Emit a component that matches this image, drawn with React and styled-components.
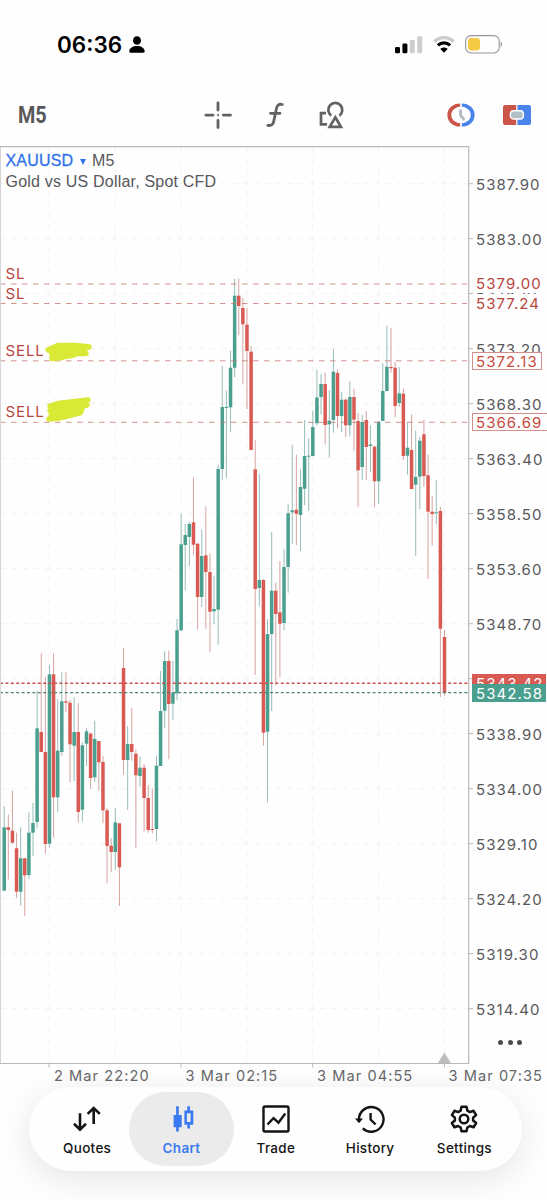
import React from "react";
import styled, { createGlobalStyle, css } from "styled-components";

const GREEN = "#4a9f8f";
const RED = "#d95a53";
const INK = "#626264";

// direction (1 up, 0 down), high, body top, body bottom, low
const candles = [
  [1, 806, 827.3, 890.7, 891], [0, 814.5, 827.3, 830, 879.5], [0, 790.7, 830.7, 842.7, 844],
  [0, 832.7, 848.3, 891.7, 897.7], [1, 827.3, 858.3, 891.7, 905.7], [0, 858, 858.3, 875.3, 916],
  [1, 812.3, 832.7, 875, 878.7], [1, 803, 823, 832.7, 856], [1, 690.7, 728.3, 822, 828.3],
  [0, 653.3, 732, 752, 752], [0, 676.7, 752, 844, 853.7], [1, 665, 674.3, 843.7, 847.7],
  [0, 653.3, 674.3, 797.3, 837.7], [1, 699.3, 750.7, 797.3, 811.7], [1, 672, 701.3, 752, 755.7],
  [0, 672, 701.3, 702.7, 712.3], [0, 700, 702.7, 744.3, 782.3], [1, 697.3, 732, 745.7, 781],
  [0, 703.3, 732, 812, 822.3], [1, 742.3, 745.3, 809.7, 821.7], [1, 728.3, 731.3, 743.7, 766],
  [0, 732.7, 733.7, 778, 788.7], [1, 720.7, 739, 777.3, 781.7], [0, 741, 741, 762.3, 790.7],
  [0, 756, 762, 810.3, 823.3], [0, 807.7, 810.3, 846, 883.3], [0, 838.3, 845.7, 852, 872],
  [1, 808, 822.3, 852, 869.7], [0, 823, 823.3, 867.3, 906], [0, 647.7, 668, 760, 774.7],
  [1, 726, 744, 760, 810], [0, 708, 744, 752, 760.7], [0, 749.3, 753.7, 775.3, 848],
  [1, 756.3, 767.7, 776, 786.7], [0, 764, 767.7, 798, 831.3], [0, 785, 798, 830, 832.7],
  [0, 788.7, 829, 830, 833.3], [1, 755.7, 765.7, 829, 841.3], [1, 671, 711, 766, 766],
  [1, 651.3, 661, 710.7, 728], [0, 650.7, 661, 704, 759.3], [1, 661, 692.7, 703.7, 720],
  [1, 619, 630.3, 693.3, 700.3], [1, 514, 544.3, 630.3, 631], [1, 523.7, 535, 545, 590.3],
  [1, 521.7, 524, 537, 566], [0, 477.5, 522.3, 544.7, 554.7], [0, 543, 543.7, 597, 629.7],
  [1, 529.3, 556, 597, 607], [0, 506.3, 555.3, 572, 628.7], [0, 553.3, 572, 611.7, 652],
  [1, 576, 609, 611.3, 624.3], [1, 464.7, 469, 609.7, 644.7], [1, 366, 407, 469, 479.7],
  [1, 390.7, 407, 407.7, 478.3], [1, 350.7, 367.7, 407.3, 432], [1, 278.7, 295.7, 367.7, 377],
  [0, 278.7, 295.7, 306, 335.3], [0, 298, 308, 324.3, 384.3], [0, 308, 324.7, 351, 409],
  [0, 346, 351.7, 450, 450], [0, 440.3, 469.3, 589, 675], [1, 474, 580, 588, 606],
  [0, 579, 580, 732.7, 745.7], [1, 619, 634, 731.7, 802.3], [1, 532, 590.7, 634, 711],
  [0, 582.7, 590.7, 614, 685.3], [0, 561, 612.3, 623.7, 677], [1, 549.3, 567, 623, 630],
  [1, 503.7, 513.3, 567, 592.7], [1, 444.7, 510.3, 512.3, 544], [0, 454.7, 509.7, 513.7, 545.3],
  [1, 469.3, 487, 515, 551], [1, 420, 456, 488.7, 505.3], [1, 438.3, 455.7, 456.5, 510.7],
  [1, 410.7, 427, 456, 456], [1, 369.5, 397.5, 423.2, 425.5], [1, 374.3, 384, 397, 414.7],
  [0, 372.7, 384, 425, 444.3], [1, 390, 420.7, 424.3, 457.7], [1, 349, 371.7, 420, 432.7],
  [0, 369.3, 373, 416, 428.3], [1, 392, 399.7, 416, 432], [0, 398.3, 399.7, 425.3, 437],
  [1, 381.3, 397, 425.3, 436], [0, 388.7, 397, 419.7, 450.7], [0, 413, 421, 470.3, 506.7],
  [1, 414.7, 422, 467, 480], [0, 411, 420, 447, 480], [1, 425.3, 444.5, 446, 472.3],
  [0, 446, 446.7, 481.3, 507.3], [1, 421.3, 421.7, 481.3, 503.7], [1, 363.3, 391, 421, 421],
  [1, 325.7, 366.7, 391, 391], [0, 328, 367, 368.2, 372.7], [0, 362, 367.7, 406, 417.3],
  [1, 367, 393.3, 403, 406.7], [0, 388.7, 393.7, 456, 460], [1, 422.7, 447.7, 455.7, 474.7],
  [0, 414.3, 450, 489, 489], [1, 430.7, 477, 484.7, 555.7], [1, 436.7, 440.7, 476.7, 509],
  [0, 420, 434.3, 476, 486.7], [0, 454.7, 475.3, 511.7, 579], [0, 496, 511.7, 514, 545.7],
  [1, 480, 512.3, 513, 524.3], [0, 507, 511, 628.7, 697], [0, 630, 637, 693, 695.7],
];

const prices = [
  "5387.90", "5383.00", "5378.10", "5373.20", "5368.30", "5363.40", "5358.50", "5353.60",
  "5348.70", "5343.80", "5338.90", "5334.00", "5329.10", "5324.20", "5319.30", "5314.40",
];

const gridX = [49, 115, 181, 247, 312.7, 378.5, 444.4];
const orderLines = [284, 303.5, 360.8, 422.3];

const CandleChart = () => (
  <Plot viewBox="0 146 475 922">
    <g stroke="#f2f2f4" strokeWidth="1" strokeDasharray="5.5 5.5">
      {prices.map((p, i) => (
        <line key={p} x1="1" x2="468" y1={183.7 + i * 55} y2={183.7 + i * 55} />
      ))}
      {gridX.map((x) => (
        <line key={x} x1={x} x2={x} y1="147" y2="1063" />
      ))}
    </g>
    {candles.map(([up, high, top, bottom, low], i) => {
      const x = 4.2 + i * 4.115;
      return (
        <g key={i}>
          <line x1={x} x2={x} y1={high} y2={low} stroke={up ? "#5c9a90" : "#c0706b"} strokeWidth="0.9" opacity="0.7" />
          <rect x={x - 1.75} y={top} width="3.5" height={Math.max(bottom - top, 1)} fill={up ? GREEN : RED} />
        </g>
      );
    })}
    <g stroke="#c4736b" strokeWidth="1" strokeDasharray="5.5 5.5" opacity="0.75">
      {orderLines.map((y) => (
        <line key={y} x1="0" x2="467" y1={y} y2={y} />
      ))}
    </g>
    <g strokeWidth="1.4" strokeDasharray="3 2.4">
      <line x1="0" x2="468" y1="683.2" y2="683.2" stroke="#cd4f4f" />
      <line x1="0" x2="468" y1="692.6" y2="692.6" stroke="#4b8379" />
    </g>
    <path d="M444.4 1052.5l6.5 10.5h-13z" fill="#bdbdbf" />
    <path d="M0.5 147V1063" stroke="#d5d5d7" />
    <path d="M0 146.7H468.7V1063.5H0" fill="none" stroke="#b9b9bc" strokeWidth="1.2" />
    <g stroke="#b9b9bc">
      {prices.map((p, i) => (
        <line key={p} x1="469" x2="473" y1={183.7 + i * 55} y2={183.7 + i * 55} />
      ))}
      {[49, 181, 312.7, 444.4].map((x) => (
        <line key={x} x1={x} x2={x} y1="1063" y2="1067.5" />
      ))}
    </g>
    {/* marker strokes over the lot sizes */}
    <g fill="none" stroke="#d8ea35" strokeWidth="5.4" strokeLinecap="round" strokeLinejoin="round">
      <path d="M48 350L58 345.5H76L89 347L66 349L50 351L84 350L86 353.5L70 353L52 355L74 355L52 358.5L62 357.5L80 353" />
      <path d="M50 406L58 403.5L88 400L72 404L54 406L87 405L70 409L50 411L82 409L80 413L52 415L49 419L60 418L80 413" />
    </g>
  </Plot>
);

const PersonIcon = () => (
  <svg width="16" height="17" viewBox="0 0 16 17">
    <ellipse cx="8" cy="4.5" rx="4" ry="4.3" />
    <path d="M.3 15.3C.3 11.8 4 9.9 8 9.9s7.700 1.900 7.700 5.400c0 1-.4 1.400-1.300 1.400H1.600C.7 16.700.3 16.300.3 15.300z" />
  </svg>
);

const SignalIcon = () => (
  <svg width="28" height="18" viewBox="0 0 28 18">
    <rect x="0" y="11" width="5" height="6.300" rx="1.300" />
    <rect x="7.400" y="7.500" width="5" height="9.800" rx="1.300" />
    <g fill="#cdcdcd">
      <rect x="14.800" y="4" width="5" height="13.300" rx="1.300" />
      <rect x="22.200" y="0.300" width="5" height="17" rx="1.300" />
    </g>
  </svg>
);

const WifiIcon = () => (
  <svg width="22" height="17" viewBox="0 0 22 17">
    <g fill="none" strokeWidth="3.100">
      <path d="M1.200 5.600C6.600.3 15.400.3 20.800 5.600" stroke="#cdcdcd" />
      <path d="M4.900 9.300C8.300 6.100 13.700 6.100 17.100 9.300" stroke="#000" />
    </g>
    <path d="M7.300 13C9.400 11 12.600 11 14.700 13L11 16.800z" />
  </svg>
);

const BatteryIcon = () => (
  <svg width="38" height="19" viewBox="0 0 38 19">
    <rect x=".6" y=".6" width="33.600" height="17.400" rx="5.500" fill="none" stroke="#97979a" strokeWidth="1.100" />
    <rect x="3" y="3" width="12" height="12.600" rx="3.300" fill="#f5ca45" />
    <path d="M35.700 6.500c1.700.7 1.700 5 0 5.700z" fill="#8e8e91" />
  </svg>
);

const CrosshairIcon = () => (
  <svg width="28" height="28" viewBox="0 0 28 28" stroke={INK} strokeWidth="2.800" strokeLinecap="round">
    <path d="M14 1.800V9M14 19.300V26.500M1.800 14.100H9M19.300 14.100H26.500" />
    <path d="M14 14.100h.01" strokeWidth="2.200" />
  </svg>
);

const FunctionIcon = () => (
  <svg width="20" height="26" viewBox="0 0 20 26" fill="none" stroke={INK} strokeWidth="2.800" strokeLinecap="round">
    <path d="M17.300 2.500C13.900 1.700 12.200 3 11.500 6.300L8.700 19.500C8 22.700 6.200 24 2.800 23.400M5.500 11.300H15" />
  </svg>
);

const ObjectsIcon = () => (
  <svg width="28" height="28" viewBox="0 0 28 28" fill="none" stroke={INK} strokeWidth="2.700">
    <path d="M8 12.200H3V23.400H9" />
    <path d="M13.200 14.600A7 7 0 1 1 21.400 14.600" />
    <path d="M17.300 16.300L22.900 25.800H11.700z" strokeLinejoin="miter" />
  </svg>
);

const ClockIcon = () => (
  <svg width="28" height="24" viewBox="0 0 28 24" fill="none">
    <path d="M13.200 2.300C6.500 2.300 2.300 6.700 2.300 12s4.200 9.700 10.900 9.700" stroke="#cb5548" strokeWidth="3.800" />
    <path d="M14.800 2.300C21.500 2.300 25.700 6.700 25.700 12s-4.200 9.700-10.900 9.700" stroke="#4b83ec" strokeWidth="3.800" />
    <circle cx="14" cy="12" r="8.500" fill="#fff" />
    <path d="M13.600 6.500V12.500L17.500 17" stroke="#b3bac0" strokeWidth="2.800" />
  </svg>
);

const OneClickIcon = () => (
  <svg width="28" height="20" viewBox="0 0 28 20">
    <path d="M2 0H13.200V20H2a2 2 0 0 1-2-2V2a2 2 0 0 1 2-2z" fill="#cb5548" />
    <path d="M14.500 0H26a2 2 0 0 1 2 2V18a2 2 0 0 1-2 2H14.500z" fill="#4b83ec" />
    <rect x="7.400" y="5.800" width="13" height="8.200" rx="3.300" fill="#b3bfc7" stroke="#fff" strokeWidth="1.400" />
  </svg>
);

const QuotesIcon = () => (
  <svg width="28" height="28" viewBox="0 0 28 28" fill="none" stroke="#141414" strokeWidth="2.600">
    <path d="M7 8.200V25M1 18.800L7 24.700L13 18.800" />
    <path d="M20.700 19V3.500M14.600 8.900L20.700 3L26.800 8.900" />
  </svg>
);

const ChartIcon = () => (
  <svg width="28" height="28" viewBox="0 0 28 28" fill="#3a7af0">
    <path d="M8.100 1.300h2.700v8.700h2.900v12.200h-2.900v4.300H8.100v-4.300H5.600V10h2.500z" />
    <path d="M19.300 1.300h2.700v4.200h3.300v14.300h-3.300v3.700h-2.700v-3.700h-2.900V5.500h2.900zM18.900 8.200v8.900h3.700V8.200z" fillRule="evenodd" />
  </svg>
);

const TradeIcon = () => (
  <svg width="28" height="28" viewBox="0 0 28 28" fill="none" stroke="#141414" strokeWidth="2.400">
    <rect x="1.500" y="1.500" width="25" height="25" rx="1.500" />
    <path d="M5.500 19.500L11.500 13.200L16.500 17.700L23.300 8.500" />
  </svg>
);

const HistoryIcon = () => (
  <svg width="30" height="28" viewBox="0 0 30 28" fill="none" stroke="#141414" strokeWidth="2.400">
    <path d="M4 15.500A12.300 12.300 0 1 1 7.800 23.300" />
    <path d="M0 13.500H8L4 18.300z" fill="#141414" stroke="none" />
    <path d="M15.600 8V14.500L20.600 19.500" />
  </svg>
);

const SettingsIcon = () => (
  <svg width="28" height="28" viewBox="0 0 28 28" fill="none" stroke="#141414" strokeWidth="2.500" strokeLinejoin="round">
    <path d="M11.500 1.700h5l.8 3.900 2.600 1.500 3.700-1.300 2.500 4.300-3 2.500v2.900l3 2.500-2.500 4.300-3.700-1.300-2.600 1.500-.8 3.800h-5l-.8-3.800-2.600-1.500-3.700 1.300-2.500-4.300 3-2.500v-2.900l-3-2.500 2.500-4.300 3.700 1.300 2.600-1.500z" />
    <circle cx="14" cy="14" r="4.300" />
  </svg>
);

const tabs = [
  { name: "Quotes", icon: <QuotesIcon /> },
  { name: "Chart", icon: <ChartIcon />, active: true },
  { name: "Trade", icon: <TradeIcon /> },
  { name: "History", icon: <HistoryIcon /> },
  { name: "Settings", icon: <SettingsIcon /> },
];

const App = () => {
  return (
    <Screen>
      <GlobalStyle />
      <StatusBar>
        <Time>06:36</Time>
        <PersonIcon />
        <StatusIcons>
          <SignalIcon />
          <WifiIcon />
          <BatteryIcon />
        </StatusIcons>
      </StatusBar>

      <Toolbar>
        <Timeframe>M5</Timeframe>
        <Tools>
          <CrosshairIcon />
          <FunctionIcon />
          <ObjectsIcon />
        </Tools>
        <TradeTools>
          <ClockIcon />
          <OneClickIcon />
        </TradeTools>
      </Toolbar>

      <ChartArea>
        <PlotPane>
          <CandleChart />
          <Legend>
            <p><Symbol>XAUUSD</Symbol><Arrow />M5</p>
            <p>Gold vs US Dollar, Spot CFD</p>
          </Legend>
          <OrderLabel $y={274}>SL</OrderLabel>
          <OrderLabel $y={294}>SL</OrderLabel>
          <OrderLabel $y={351}>SELL</OrderLabel>
          <OrderLabel $y={412}>SELL</OrderLabel>
        </PlotPane>
        <PriceAxis>
          {prices.map((p) => (
            <Price key={p}>{p}</Price>
          ))}
          <PriceTag $y={283.700}>5379.00</PriceTag>
          <PriceTag $y={303.500}>5377.24</PriceTag>
          <PriceTag $y={361} $kind="outline">5372.13</PriceTag>
          <PriceTag $y={422} $kind="outline" $wide>5366.69</PriceTag>
          <PriceTag $y={683.300} $kind="ask">5343.42</PriceTag>
          <PriceTag $y={692.800} $kind="bid">5342.58</PriceTag>
          <MoreDots><i /><i /><i /></MoreDots>
        </PriceAxis>
      </ChartArea>

      <TimeAxis>
        <span>2 Mar 22:20</span>
        <span>3 Mar 02:15</span>
        <span>3 Mar 04:55</span>
        <span>3 Mar 07:35</span>
      </TimeAxis>

      <TabBar>
        {tabs.map((t) => (
          <Tab key={t.name} $active={t.active}>
            {t.icon}
            <span>{t.name}</span>
          </Tab>
        ))}
      </TabBar>
    </Screen>
  );
};
export default App;

const GlobalStyle = createGlobalStyle`
  body {
    margin: 0;
    background: #fff;
  }
  svg {
    display: block;
    flex: none;
  }
  p {
    margin: 0;
  }
`;

const Screen = styled.div`
  width: 547px;
  height: 1200px;
  overflow: hidden;
  display: flex;
  flex-direction: column;
  background: #fefefe;
  font-family: Inter, "Liberation Sans", sans-serif;
`;

const StatusBar = styled.header`
  height: 90px;
  box-sizing: border-box;
  padding: 0 44px 1px 57px;
  display: flex;
  align-items: center;
  gap: 7px;
`;

const Time = styled.span`
  width: 65px;
  font-size: 22.5px;
  font-weight: 600;
  letter-spacing: 0;
  white-space: nowrap;
`;

const StatusIcons = styled.div`
  margin-left: auto;
  display: flex;
  align-items: center;
  gap: 10px;
`;

const Toolbar = styled.div`
  height: 56px;
  box-sizing: border-box;
  padding: 0 16px 6px 18px;
  display: flex;
  align-items: center;
`;

const Timeframe = styled.span`
  width: 186px;
  font: 700 23px Roboto, sans-serif;
  color: #58585a;
  transform: scaleX(0.86);
  transform-origin: left;
`;

const Tools = styled.div`
  display: flex;
  align-items: center;
  gap: 33px;
`;

const TradeTools = styled.div`
  margin-left: auto;
  display: flex;
  align-items: center;
  gap: 28px;
`;

const ChartArea = styled.div`
  height: 918px;
  display: grid;
  grid-template-columns: 469px 78px;
`;

const PlotPane = styled.div`
  position: relative;
`;

const Plot = styled.svg`
  width: 475px;
  height: 922px;
`;

const Legend = styled.div`
  position: absolute;
  left: 5.5px;
  top: 5px;
  font: 16px/20.5px "Liberation Sans", Arial, sans-serif;
  letter-spacing: 0.2px;
  color: #58585b;
  white-space: nowrap;
`;

const Symbol = styled.span`
  color: #2f73e8;
  -webkit-text-stroke: 0.3px #2f73e8;
`;

const Arrow = styled.i`
  display: inline-block;
  margin: 0 6px 1px 6.5px;
  border: 3.5px solid transparent;
  border-top: 6.5px solid #2f73e8;
  border-bottom: 0;
`;

const OrderLabel = styled.span`
  position: absolute;
  left: 5.5px;
  top: ${(p) => p.$y - 156}px;
  font-size: 15px;
  line-height: 20px;
  letter-spacing: 0.9px;
  color: #b8463f;
`;

const PriceAxis = styled.div`
  position: relative;
  padding-top: 11px;
  font-size: 15px;
  letter-spacing: 1.05px;
  white-space: nowrap;
  color: #58585b;
`;

const Price = styled.div`
  height: 55px;
  padding-left: 7px;
  line-height: 55px;
`;

const tagKinds = {
  outline: css`
    color: #c74a40;
    box-shadow: inset 0 0 0 1px #d58f8a;
  `,
  ask: css`
    color: #fff;
    background: ${RED};
  `,
  bid: css`
    color: #fff;
    background: ${GREEN};
  `,
};

const PriceTag = styled.span`
  position: absolute;
  left: 2.5px;
  top: ${(p) => p.$y - 155.300}px;
  width: ${(p) => (p.$wide ? 78 : p.$kind === "outline" ? 70.500 : 74)}px;
  height: 18.6px;
  box-sizing: border-box;
  padding-left: 4.5px;
  line-height: 19px;
  color: #b8463f;
  background: #fefefe;
  ${(p) => tagKinds[p.$kind]}
`;

const MoreDots = styled.div`
  position: absolute;
  left: 29px;
  top: 893.5px;
  display: flex;
  gap: 4.5px;

  i {
    width: 5px;
    height: 5px;
    border-radius: 50%;
    background: #4c4c4e;
  }
`;

const TimeAxis = styled.div`
  height: 22.5px;
  padding-left: 54px;
  display: grid;
  grid-template-columns: repeat(4, 131.5px);
  font-size: 14.6px;
  line-height: 24px;
  letter-spacing: 1.05px;
  white-space: nowrap;
  color: #68686b;
`;

const TabBar = styled.nav`
  width: 493.5px;
  height: 84.5px;
  box-sizing: border-box;
  margin-left: 28.5px;
  padding: 5.5px 10.5px 5.5px 11.5px;
  display: flex;
  border-radius: 42px;
  background: #fefefe;
  box-shadow: 0 8px 34px rgba(0, 0, 0, 0.1);
`;

const Tab = styled.div`
  flex: 1;
  height: 74px;
  box-sizing: border-box;
  padding-top: 13px;
  display: flex;
  flex-direction: column;
  align-items: center;
  gap: 7px;
  font-size: 13.5px;
  line-height: 17px;
  font-weight: 500;
  letter-spacing: 0.3px;
  color: #141414;

  ${(p) => p.$active && css`
    margin: 0 -5.5px;
    flex: 0 0 105.5px;
    border-radius: 37px;
    background: #ebebeb;
    color: #3a7af0;
    font-weight: 600;
  `}
`;
